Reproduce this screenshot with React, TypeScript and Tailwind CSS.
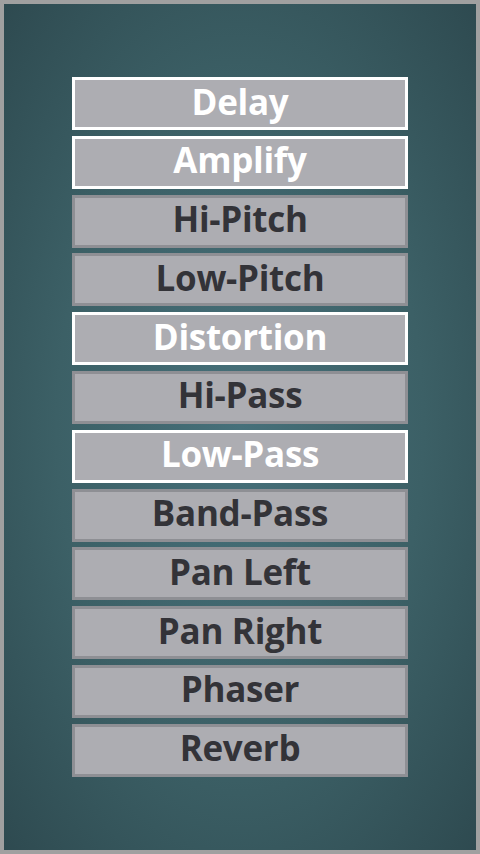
import React from "react";

const items: { label: string; active: boolean }[] = [
  { label: "Delay", active: true },
  { label: "Amplify", active: true },
  { label: "Hi-Pitch", active: false },
  { label: "Low-Pitch", active: false },
  { label: "Distortion", active: true },
  { label: "Hi-Pass", active: false },
  { label: "Low-Pass", active: true },
  { label: "Band-Pass", active: false },
  { label: "Pan Left", active: false },
  { label: "Pan Right", active: false },
  { label: "Phaser", active: false },
  { label: "Reverb", active: false },
];

export default function App() {
  return (
    <div className="w-[480px] h-[854px] border-[4px] border-[#a0a0a0] bg-[radial-gradient(ellipse_at_center,#46707a_0%,#3c6066_55%,#2e4a50_100%)] flex flex-col items-center pt-[73px]">
      <div className="flex flex-col gap-[5.8px] w-[336px]">
        {items.map((it) => (
          <div
            key={it.label}
            className={
              "h-[53px] border-[3px] bg-[#adadb2] flex items-center justify-center font-bold text-[35px] tracking-[-0.3px] leading-none pb-[5px] " +
              (it.active ? "border-white text-white" : "border-[#8e8f94] text-[#333338]")
            }
            style={{ fontFamily: '"Open Sans", "DejaVu Sans", sans-serif' }}
          >
            {it.label}
          </div>
        ))}
      </div>
    </div>
  );
}
